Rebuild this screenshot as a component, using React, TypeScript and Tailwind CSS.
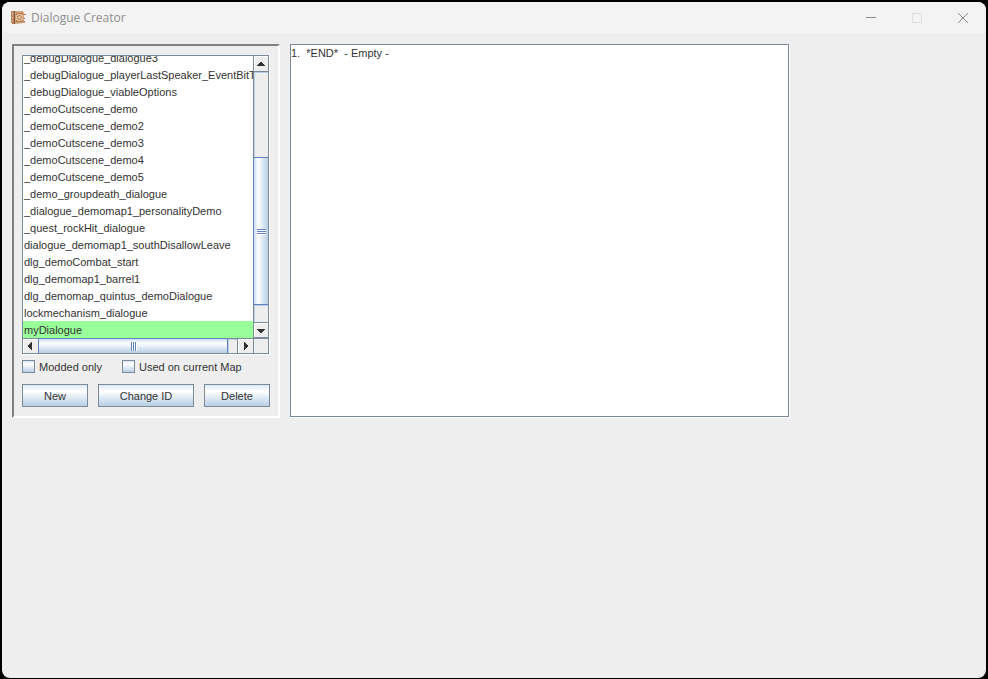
import { useState } from "react";

const DIALOGUES = [
  "_debugDialogue_dialogue3",
  "_debugDialogue_playerLastSpeaker_EventBitTest",
  "_debugDialogue_viableOptions",
  "_demoCutscene_demo",
  "_demoCutscene_demo2",
  "_demoCutscene_demo3",
  "_demoCutscene_demo4",
  "_demoCutscene_demo5",
  "_demo_groupdeath_dialogue",
  "_dialogue_demomap1_personalityDemo",
  "_quest_rockHit_dialogue",
  "dialogue_demomap1_southDisallowLeave",
  "dlg_demoCombat_start",
  "dlg_demomap1_barrel1",
  "dlg_demomap_quintus_demoDialogue",
  "lockmechanism_dialogue",
  "myDialogue",
];

function AppIcon() {
  return (
    <svg width="15" height="15" viewBox="0 0 15 15" aria-hidden="true">
      <path d="M0 1h12v1h1v2h1v1h-1v3h1v1h-1v3h1v1h-1l-9 1H1v-1H0z" fill="#cfa27c" />
      <path d="M0 1h3v13H1v-1H0z" fill="#b98660" />
      <path d="M3 1h1v13H3z" fill="#7e5236" />
      <path d="M1 3h1v2H1zM1 7h1v2H1zM1 11h1v1H1z" fill="#dcb38c" />
      <path d="M5 3h7v9H5z" fill="#b07a52" />
      <path d="M6 4h5v1h1v5h-1v1H6v-1H5V5h1z" fill="#e3bf98" />
      <path d="M7 5h3v1h1v3h-1v1H7V9H6V6h1z" fill="#c4936a" />
      <path d="M8 6h1v1h1v1H9v1H8V8H7V7h1z" fill="#e6c6a2" />
      <path d="M13 4h2v1h-2zM13 8h1v1h-1zM13 11h1v1h-1z" fill="#a8744e" />
    </svg>
  );
}

function TitleBar() {
  return (
    <header className="flex h-[31px] items-center bg-[#f3f3f3] pl-[9px] text-[#8f8f8f]">
      <AppIcon />
      <h1 className="ml-[5px] flex-1 font-['Open_Sans',sans-serif] text-xs">Dialogue Creator</h1>
      <button aria-label="Minimize" className="flex h-full w-[46px] items-center justify-center">
        <svg width="10" height="10" viewBox="0 0 10 10">
          <path d="M0 4.5h10" stroke="#8f8f8f" />
        </svg>
      </button>
      <button aria-label="Maximize" disabled className="flex h-full w-[46px] items-center justify-center">
        <svg width="10" height="10" viewBox="0 0 10 10">
          <rect x=".5" y=".5" width="9" height="9" rx=".5" fill="none" stroke="#dedede" />
        </svg>
      </button>
      <button aria-label="Close" className="flex h-full w-[46px] items-center justify-center">
        <svg width="10" height="10" viewBox="0 0 10 10">
          <path d="M0 0l10 10M10 0L0 10" stroke="#8a8a8a" />
        </svg>
      </button>
    </header>
  );
}

function VerticalScrollbar() {
  return (
    <div className="flex w-[15px] flex-col border-l border-[#7a8a99]">
      <button
        aria-label="Scroll up"
        className="flex h-4 items-center justify-center border-b border-[#7a8a99] bg-[#eeeeee] shadow-[inset_1px_1px_0_#fff]"
      >
        <svg width="8" height="4" viewBox="0 0 8 4" shapeRendering="crispEdges">
          <path d="M3 0h2v1h1v1h1v1h1v1H0V3h1V2h1V1h1z" fill="#333" />
        </svg>
      </button>
      <div className="h-[85px] bg-[#eeeeee] shadow-[inset_1px_1px_0_#b8cfe5]" />
      <div className="-ml-px flex flex-1 flex-col items-center justify-center border-y border-l border-[#6382bf] bg-linear-to-r from-[#c8ddf2] via-white via-30% to-[#b8cfe5] pt-0.5">
        <svg width="9" height="6" viewBox="0 0 9 6" shapeRendering="crispEdges">
          <path d="M0 0h9v1H0zM0 2h9v1H0zM0 4h9v1H0z" fill="#6382bf" />
          <path d="M1 1h8v1H1zM1 3h8v1H1zM1 5h8v1H1z" fill="#fff" />
        </svg>
      </div>
      <div className="h-[17px] bg-[#eeeeee] shadow-[inset_1px_1px_0_#b8cfe5]" />
      <button
        aria-label="Scroll down"
        className="flex h-4 items-center justify-center border-y border-[#7a8a99] bg-[#eeeeee] pt-px shadow-[inset_1px_1px_0_#fff]"
      >
        <svg width="8" height="4" viewBox="0 0 8 4" shapeRendering="crispEdges">
          <path d="M0 0h8v1H7v1H6v1H5v1H3V3H2V2H1V1H0z" fill="#333" />
        </svg>
      </button>
    </div>
  );
}

function HorizontalScrollbar() {
  return (
    <div className="flex h-[15px] border-t border-[#7a8a99]">
      <button
        aria-label="Scroll left"
        className="flex w-[15px] items-center justify-center bg-[#eeeeee] pr-0.5 shadow-[inset_1px_1px_0_#fff]"
      >
        <svg width="4" height="8" viewBox="0 0 4 8" shapeRendering="crispEdges">
          <path d="M4 0v8H3V7H2V6H1V5H0V3h1V2h1V1h1V0z" fill="#333" />
        </svg>
      </button>
      <div className="-mt-px flex flex-1 items-center justify-center border-x border-t border-[#6382bf] bg-linear-to-b from-[#c8ddf2] via-white via-30% to-[#b8cfe5] pl-0.5">
        <svg width="6" height="9" viewBox="0 0 6 9" shapeRendering="crispEdges">
          <path d="M0 0h1v9H0zM2 0h1v9H2zM4 0h1v9H4z" fill="#6382bf" />
          <path d="M1 1h1v8H1zM3 1h1v8H3zM5 1h1v8H5z" fill="#fff" />
        </svg>
      </div>
      <div className="w-[9px] bg-[#eeeeee] shadow-[inset_1px_1px_0_#b8cfe5]" />
      <button
        aria-label="Scroll right"
        className="flex w-4 items-center justify-center border-l border-[#7a8a99] bg-[#eeeeee] shadow-[inset_1px_1px_0_#fff]"
      >
        <svg width="4" height="8" viewBox="0 0 4 8" shapeRendering="crispEdges">
          <path d="M0 0h1v1h1v1h1v1h1v2H3v1H2v1H1v1H0z" fill="#333" />
        </svg>
      </button>
    </div>
  );
}

function DialogueList() {
  const [selected, setSelected] = useState("myDialogue");

  return (
    <div className="mr-px grid grid-cols-[1fr_15px] border border-[#7a8a99] shadow-[1px_1px_0_#fff]">
      <ul
        role="listbox"
        aria-label="Dialogues"
        className="flex h-[282px] min-w-0 flex-col justify-end overflow-hidden bg-white"
      >
        {DIALOGUES.map((name) => (
          <li
            key={name}
            role="option"
            aria-selected={name === selected}
            onClick={() => setSelected(name)}
            className={`h-[17px] shrink-0 overflow-hidden pt-px pl-px leading-[17px] whitespace-nowrap ${
              name === selected ? "bg-[#99ff99]" : ""
            }`}
          >
            {name}
          </li>
        ))}
      </ul>
      <VerticalScrollbar />
      <HorizontalScrollbar />
      <div className="border-t border-l border-[#7a8a99] bg-[#eeeeee]" />
    </div>
  );
}

function CheckBox({ label }: { label: string }) {
  return (
    <label className="flex items-center gap-1">
      <input
        type="checkbox"
        className="size-[13px] appearance-none border border-[#7a8a99] bg-linear-to-b from-[#dde8f3] via-white via-30% to-[#b8cfe5] checked:bg-[#6382bf]"
      />
      <span className="pt-px">{label}</span>
    </label>
  );
}

function MetalButton({ label, className }: { label: string; className: string }) {
  return (
    <button
      className={`h-[23px] border border-[#7a8a99] bg-linear-to-b from-[#dde8f3] via-white via-30% to-[#b8cfe5] pt-px ${className}`}
    >
      {label}
    </button>
  );
}

export default function App() {
  return (
    <div className="flex min-h-screen flex-col bg-black px-0.5 pt-0.5 pb-px font-['Liberation_Sans',Arial,sans-serif] text-[11px] text-[#333333] select-none">
      <div className="flex flex-1 flex-col overflow-hidden rounded-lg bg-[#eeeeee]">
        <TitleBar />
        <main className="flex items-stretch gap-2.5 px-2.5 pt-[11px]">
          <section className="w-[268px] shrink-0 border-2 border-t-[#808080] border-r-white border-b-white border-l-[#808080] px-2 py-[9px]">
            <DialogueList />
            <div className="mt-1.5 flex h-[13px] items-center gap-5">
              <CheckBox label="Modded only" />
              <CheckBox label="Used on current Map" />
            </div>
            <div className="mt-[11px] flex gap-2.5">
              <MetalButton label="New" className="w-[66px]" />
              <MetalButton label="Change ID" className="flex-1" />
              <MetalButton label="Delete" className="w-[66px]" />
            </div>
          </section>
          <section className="mb-px w-[499px] border border-[#7a8a99] bg-white shadow-[1px_1px_0_#fff]">
            <ol aria-label="Dialogue lines">
              <li className="leading-[17px] whitespace-pre">{"1.  *END*  - Empty -"}</li>
            </ol>
          </section>
        </main>
      </div>
    </div>
  );
}
